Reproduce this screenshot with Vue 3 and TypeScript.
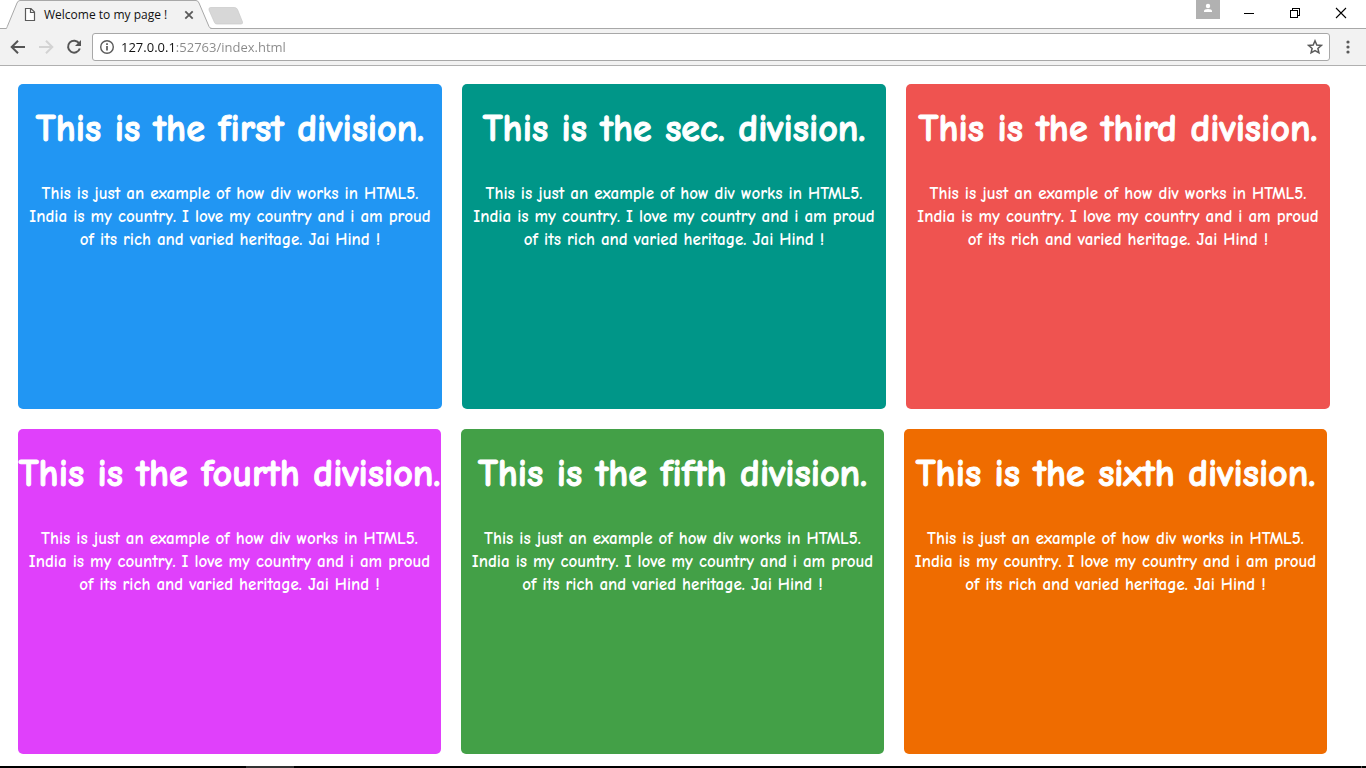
<script setup lang="ts">
import { ref } from 'vue'

interface Division {
  name: string
  tone: string
}

const rows: Division[][] = [
  [
    { name: 'first', tone: 'blue' },
    { name: 'sec.', tone: 'teal' },
    { name: 'third', tone: 'red' },
  ],
  [
    { name: 'fourth', tone: 'purple' },
    { name: 'fifth', tone: 'green' },
    { name: 'sixth', tone: 'orange' },
  ],
]

const address = ref('127.0.0.1:52763/index.html')
</script>

<template>
  <div class="window">
    <header class="chrome">
      <div class="strip">
        <div class="tab">
          <svg class="tab-shape" viewBox="0 0 206 29" width="206" height="29" aria-hidden="true">
            <path d="M0 28.500 Q.8 28 1.300 26.500 L11 3 Q12 .5 14 .5 H190 Q192 .5 193 3 L203 26.500 Q204 28.500 206 28.500" fill="#f2f2f2" stroke="#a8a8a8" />
            <path d="M1 28.500H204" stroke="#f2f2f2" />
          </svg>
          <svg class="page-icon" viewBox="0 0 12 15" width="12" height="15" aria-hidden="true">
            <path d="M1.500 1.500H7L10.500 5V13.500H1.500ZM6.500 1.500V5.500H10.500" fill="#fff" stroke="#5a5a5a" stroke-width="1.200" />
          </svg>
          <span class="tab-title">Welcome to my page !</span>
          <button class="tab-close" type="button" aria-label="Close tab">
            <svg viewBox="0 0 10 10" width="10" height="10"><path d="M1.300 1.300 8.700 8.700M8.700 1.300 1.300 8.700" stroke="#5a5a5a" stroke-width="1.800" /></svg>
          </button>
        </div>
        <button class="new-tab" type="button" aria-label="New tab">
          <svg viewBox="0 0 36 18" width="36" height="18">
            <path d="M2.500 .5H26.500Q28.500 .5 29.500 2.500L34.500 15Q35 17 33 17H9Q7 17 6.500 15.500L1 3Q.5 .5 2.500 .5Z" fill="#d7d7d7" stroke="#c8c8c8" stroke-width=".7" />
          </svg>
        </button>
        <div class="window-buttons">
          <button class="profile" type="button" aria-label="Profile">
            <svg viewBox="0 0 24 19" width="24" height="19"><circle cx="12" cy="6" r="2.200" fill="#fff" /><path d="M8 12V11Q8 9 12 9T16 11V12Z" fill="#fff" /></svg>
          </button>
          <button class="win" type="button" aria-label="Minimize">
            <svg viewBox="0 0 12 12" width="12" height="12" shape-rendering="crispEdges"><path d="M1 6.500H11" stroke="#000" /></svg>
          </button>
          <button class="win" type="button" aria-label="Restore">
            <svg viewBox="0 0 12 12" width="12" height="12" shape-rendering="crispEdges"><path d="M1.500 3.500H8.500V10.500H1.500ZM3.500 3.500V1.500H10.500V8.500H8.500" fill="none" stroke="#000" /></svg>
          </button>
          <button class="win" type="button" aria-label="Close">
            <svg viewBox="0 0 12 12" width="12" height="12"><path d="M1 1 11 11M11 1 1 11" stroke="#000" stroke-width="1.100" /></svg>
          </button>
        </div>
      </div>

      <nav class="toolbar">
        <button class="tool" type="button" aria-label="Back">
          <svg viewBox="0 0 16 16" width="16" height="16"><path d="M15 8H2.500M8 1.700 1.700 8 8 14.300" fill="none" stroke="#555" stroke-width="2" /></svg>
        </button>
        <button class="tool" type="button" aria-label="Forward">
          <svg viewBox="0 0 16 16" width="16" height="16"><path d="M1 8H13.500M8 1.700 14.300 8 8 14.300" fill="none" stroke="#d3d3d3" stroke-width="2" /></svg>
        </button>
        <button class="tool" type="button" aria-label="Reload">
          <svg viewBox="0 0 16 16" width="16" height="16"><path d="M13.200 4.500A6 6 0 1 0 13.800 9.500" fill="none" stroke="#555" stroke-width="2" /><path d="M15 1V7H9Z" fill="#555" /></svg>
        </button>
        <div class="omnibox">
          <button class="tool info" type="button" aria-label="View site information">
            <svg viewBox="0 0 16 16" width="16" height="16"><circle cx="8" cy="8" r="6.300" fill="none" stroke="#5a5a5a" stroke-width="1.400" /><path d="M8 7V11.500M8 4.300V6" stroke="#5a5a5a" stroke-width="1.700" /></svg>
          </button>
          <input v-model="address" class="address" type="text" aria-label="Address" spellcheck="false" />
          <button class="tool star" type="button" aria-label="Bookmark this page">
            <svg viewBox="0 0 16 16" width="16" height="16"><path d="M8 1.800 9.800 6 14.300 6.400 10.900 9.400 11.900 13.800 8 11.500 4.100 13.800 5.100 9.400 1.700 6.400 6.200 6Z" fill="none" stroke="#5a5a5a" stroke-width="1.500" /></svg>
          </button>
        </div>
        <button class="menu" type="button" aria-label="Menu">
          <svg viewBox="0 0 4 14" width="4" height="14"><g fill="#5a5a5a"><circle cx="2" cy="2" r="1.600" /><circle cx="2" cy="7" r="1.600" /><circle cx="2" cy="12" r="1.600" /></g></svg>
        </button>
      </nav>
    </header>

    <main class="page">
      <div v-for="(row, i) in rows" :key="i" class="row">
        <section v-for="item in row" :key="item.name" class="card" :class="item.tone">
          <h1>This is the {{ item.name }} division.</h1>
          <p>
            This is just an example of how div works in HTML5.<br />
            India is my country. I love my country and i am proud<br />
            of its rich and varied heritage. Jai Hind !
          </p>
        </section>
      </div>
    </main>

    <footer class="taskbar"><span class="task"></span><span class="peek"></span></footer>
  </div>
</template>

<style>
body {
  margin: 0;
  background: #fff;
}
</style>

<style scoped>
.window {
  display: flex;
  flex-direction: column;
  min-height: 100vh;
  font-family: "Open Sans", "Noto Sans", sans-serif;
}
button {
  display: flex;
  align-items: center;
  justify-content: center;
  padding: 0;
  border: 0;
  background: none;
}
svg {
  display: block;
  flex: none;
}
.strip {
  display: flex;
  height: 28px;
  padding: 0 2px 0 6px;
  border-bottom: 1px solid #a8a8a8;
}
.tab {
  position: relative;
  display: flex;
  align-items: center;
  box-sizing: border-box;
  width: 202px;
  height: 29px;
  padding: 0 13px 0 18px;
}
.tab-shape {
  position: absolute;
  left: 0;
  top: 0;
}
.page-icon,
.tab-title,
.tab-close {
  position: relative;
}
.tab-title {
  flex: 1;
  margin-left: 8px;
  font-size: 12px;
  line-height: 16px;
  white-space: nowrap;
  color: #111;
}
.tab-close {
  width: 12px;
  height: 16px;
}
.new-tab {
  height: 18px;
  margin-top: 7px;
}
.window-buttons {
  display: flex;
  align-items: flex-start;
  margin-left: auto;
}
.profile {
  width: 24px;
  height: 19px;
  margin-right: 6px;
  background: #b1b1b1;
}
.win {
  width: 46px;
  height: 26px;
}
.toolbar {
  display: flex;
  align-items: center;
  box-sizing: border-box;
  height: 37px;
  padding: 0 8px 0 4px;
  background: #f2f2f2;
  border-bottom: 1px solid #b0b0b0;
}
.tool {
  width: 28px;
  height: 28px;
  flex: none;
}
.omnibox {
  display: flex;
  align-items: center;
  flex: 1;
  box-sizing: border-box;
  height: 28px;
  margin-left: 4px;
  border: 1px solid #a8a8a8;
  border-radius: 3px;
  background: #fff;
}
.address {
  flex: 1;
  min-width: 0;
  height: 24px;
  padding: 0;
  border: 0;
  outline: 0;
  font-family: inherit;
  font-size: 13px;
  color: transparent;
  caret-color: #000;
  background-image: linear-gradient(90deg, #111 54px, #888 54px);
  background-clip: text;
  -webkit-background-clip: text;
}
.menu {
  width: 20px;
  height: 28px;
  margin-left: 8px;
}
.page {
  display: flex;
  flex: 1;
  flex-direction: column;
  gap: 20px;
  padding: 18px 36px 12px 18px;
}
.row {
  display: flex;
  gap: 20px;
}
.row:last-child {
  padding-right: 3px;
}
.card {
  flex: 1 1 0;
  min-width: 0;
  box-sizing: border-box;
  min-height: 325px;
  border-radius: 5px;
  color: #fff;
  text-align: center;
  font-family: "Comic Sans MS", "Comic Neue", "Open Sans", sans-serif;
}
h1 {
  margin: 21px 0 0;
  font-size: 38px;
  line-height: 48px;
  font-weight: 700;
  white-space: nowrap;
  -webkit-text-stroke: 1px #fff;
}
p {
  margin: 29px 0 0;
  font-size: 17px;
  line-height: 23px;
  font-weight: 700;
  white-space: nowrap;
}
.blue { background: #2196f3; }
.teal { background: #009688; }
.red { background: #ef5350; }
.purple { background: #e040fb; }
.green { background: #43a047; }
.orange { background: #ef6c00; }
.taskbar {
  display: flex;
  justify-content: space-between;
  height: 2px;
  padding: 0 4px 0 246px;
  background: #000;
}
.task {
  width: 48px;
  background: #333;
}
.peek {
  width: 1px;
  background: #555;
}
</style>
